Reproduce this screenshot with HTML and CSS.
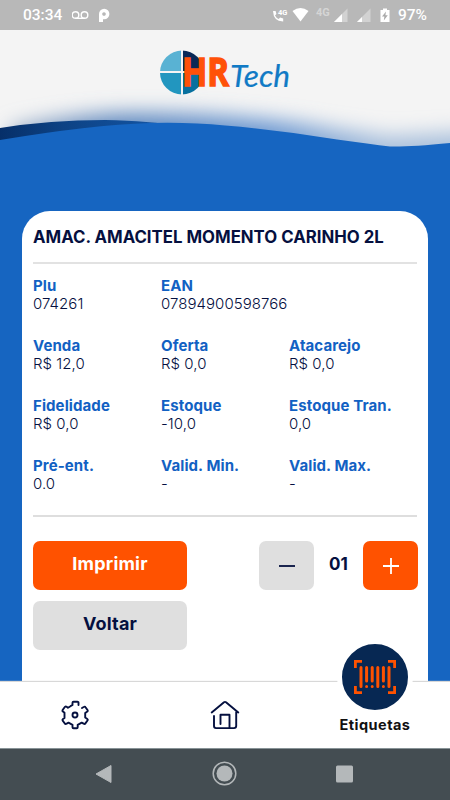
FILE: index.html
```html
<!DOCTYPE html>
<html lang="pt-BR">
<head>
    <meta charset="UTF-8">
    <meta name="viewport" content="width=device-width, initial-scale=1.0">
    <title>HRTech - Etiquetas</title>
    <link rel="stylesheet" href="styles.css">
</head>
<body>
    <div class="status-bar">
        <span class="clock">03:34</span>
        <svg class="status-left" width="42" height="30" viewBox="0 0 42 30">
            <g fill="none" stroke="#fff" stroke-width="1.4">
                <circle cx="3.5" cy="15" r="3.3"/>
                <circle cx="12.5" cy="15" r="3.3"/>
                <path d="M3.5 18.3h9"/>
            </g>
            <path fill="#fff" fill-rule="evenodd" d="M27 22V14a5.200 5.200 0 1 1 5.200 5.200h-1.200V22zM32 12.200a1.800 1.800 0 1 0 .01 0z"/>
        </svg>
        <svg class="status-right" width="122" height="30" viewBox="0 0 122 30">
            <path fill="#fff" d="M1 11h2.600l.8 3-1.400 1.400q1.400 2.600 3.700 3.600l1.400-1.500 3.100.9v3Q1.500 21.500 1 11z"/>
            <text class="tiny" x="6" y="15">4G</text>
            <path fill="#fff" d="M20.500 11Q28.500 5 36.500 11L28.500 21.500z"/>
            <text class="network" x="44" y="16">4G</text>
            <path fill="#d2d2d2" d="M75.500 8.500V22H62z"/>
            <path fill="#fff" d="M70 14v8h-8z"/>
            <path fill="#d2d2d2" d="M98.500 8.500V22H85z"/>
            <path fill="#fff" d="M90 17v5h-5z"/>
            <path fill="#fff" d="M108.500 10h2.500V8.500h4V10h2.500v12h-9z"/>
            <path fill="#aaa" d="M114 11.500l-4 5h2.400l-.6 4 4-5.200h-2.400z"/>
        </svg>
        <span class="battery">97%</span>
    </div>

    <header>
        <svg width="450" height="130" viewBox="0 30 450 130">
            <defs>
                <linearGradient id="dark" x1="0" x2="1" y1="0" y2="0">
                    <stop offset="0" stop-color="#062f69"/>
                    <stop offset=".35" stop-color="#0d4284"/>
                    <stop offset="1" stop-color="#1559ab"/>
                </linearGradient>
                <linearGradient id="shade" gradientUnits="userSpaceOnUse" x1="0" x2="450" y1="0" y2="0">
                    <stop offset="0" stop-color="#9fb0c8"/>
                    <stop offset=".25" stop-color="#6089bf"/>
                    <stop offset=".6" stop-color="#6f9ad2"/>
                    <stop offset=".85" stop-color="#a9c0dc"/>
                    <stop offset="1" stop-color="#a9c0dc"/>
                </linearGradient>
                <filter id="soft" x="-20%" y="-60%" width="140%" height="220%">
                    <feGaussianBlur stdDeviation="10"/>
                </filter>
                <clipPath id="circle"><circle cx="182" cy="72.500" r="22"/></clipPath>
            </defs>
            <rect y="30" width="450" height="130" fill="#f4f4f4"/>
            <path fill="url(#shade)" filter="url(#soft)" d="M10 128Q80 111 160 113Q225 114 300 123Q345 131 390 136L480 131V190H10z"/>
            <path fill="url(#dark)" d="M0 128Q50 120 105 120Q150 121 180 126L0 145z"/>
            <path fill="#1665c1" d="M0 140Q90 125 150 123Q190 122 225 125.500Q280 130 337 139.500Q370 144 390 146.500Q410 147 450 143V160H0z"/>

            <g clip-path="url(#circle)">
                <rect x="160" y="50" width="21" height="21" fill="#59b2d3"/>
                <rect x="183" y="50" width="22" height="21" fill="#092957"/>
                <rect x="160" y="73" width="21" height="22" fill="#2296bf"/>
                <rect x="183" y="73" width="22" height="22" fill="#07709f"/>
            </g>
            <text class="logo-hr" x="182" y="86" textLength="47" lengthAdjust="spacingAndGlyphs">HR</text>
            <text class="logo-tech" x="230" y="86.500" textLength="60" lengthAdjust="spacingAndGlyphs">Tech</text>
        </svg>
    </header>

    <main>
        <section class="card">
            <h1>AMAC. AMACITEL MOMENTO CARINHO 2L</h1>
            <dl class="fields">
                <div><dt>Plu</dt><dd>074261</dd></div>
                <div class="ean"><dt>EAN</dt><dd>07894900598766</dd></div>
                <div><dt>Venda</dt><dd>R$ 12,0</dd></div>
                <div><dt>Oferta</dt><dd>R$ 0,0</dd></div>
                <div><dt>Atacarejo</dt><dd>R$ 0,0</dd></div>
                <div><dt>Fidelidade</dt><dd>R$ 0,0</dd></div>
                <div><dt>Estoque</dt><dd>-10,0</dd></div>
                <div><dt>Estoque Tran.</dt><dd>0,0</dd></div>
                <div><dt>Pré-ent.</dt><dd>0.0</dd></div>
                <div><dt>Valid. Min.</dt><dd>-</dd></div>
                <div><dt>Valid. Max.</dt><dd>-</dd></div>
            </dl>
            <div class="actions">
                <div class="buttons">
                    <button class="btn primary">Imprimir</button>
                    <button class="btn">Voltar</button>
                </div>
                <div class="counter">
                    <button class="btn step" aria-label="Menos">
                        <svg width="16" height="16"><path d="M0 8h16" stroke="#05103f" stroke-width="1.800"/></svg>
                    </button>
                    <span class="quantity">01</span>
                    <button class="btn step primary" aria-label="Mais">
                        <svg width="16" height="16"><path d="M0 8h16M8 0v16" stroke="#fff" stroke-width="1.800"/></svg>
                    </button>
                </div>
            </div>
        </section>
    </main>

    <nav class="tabs">
        <a class="tab">
            <svg width="30" height="30" viewBox="0 0 30 30" fill="none" stroke="#05103f" stroke-width="1.900" stroke-linecap="round" stroke-linejoin="round">
                <path d="M18.500 5V2.500Q18.500 1.800 17.500 1.800H13.500Q12.500 1.800 12.500 2.800V5Q11.800 5.500 10.500 6.200L8 7.700Q6 5.800 5 6.800L2.600 10Q2 11 3 11.600L4.500 12.800V18L3 19Q2 19.800 2.700 20.700L4.800 23.500Q5.500 24.300 6.700 23.600L8.500 22.700L12.500 24.800V27.300Q12.500 28.300 13.600 28.300H16.700Q17.700 28.300 17.700 27.200V24.800L21.700 22.700L23.600 23.700Q24.800 24.300 25.400 23.400L27.500 20.500Q28.200 19.500 27 18.700L25.200 17.500V13L27 11.700Q28.200 11 27.500 10L25.500 7.200Q24.900 6.200 23.700 7L22 8"/>
                <circle cx="15" cy="15" r="2.500"/>
            </svg>
        </a>
        <a class="tab">
            <svg width="30" height="30" viewBox="0 0 30 30" fill="none" stroke="#05103f" stroke-width="1.900" stroke-linecap="round" stroke-linejoin="round">
                <path d="M1.700 12.500L14 2.200Q15 1.500 16 2.200L28.300 12.500M4 16V26Q4 28.100 6 28.100H24Q26.200 28.100 26.200 26V12M10.500 24V14.700H19.500V28"/>
            </svg>
        </a>
        <a class="tab active">
            <span class="bubble">
                <svg width="44" height="36" viewBox="0 0 44 36" fill="none" stroke="#ff5200" stroke-width="2.800">
                    <path d="M2.400 9V2.400H9M35 2.400H41.600V9M2.400 27V33.600H9M35 33.600H41.600V27"/>
                    <path stroke-linecap="round" stroke-width="3" d="M8 8.500V27.500M13.600 8.500V22M19.200 8.500V22M24.800 8.500V27.500M30.400 8.500V22M36 8.500V27.500M13.600 27.500v.01M19.200 27.500v.01M30.400 27.500v.01"/>
                </svg>
            </span>
            <span class="tab-label">Etiquetas</span>
        </a>
    </nav>

    <footer class="system-nav">
        <svg width="24" height="26"><path d="M3 13L18 4.500V21.500z" fill="#b4b8ba" stroke="#b4b8ba" stroke-linejoin="round"/></svg>
        <svg width="26" height="26"><circle cx="12.500" cy="12.500" r="11.300" fill="none" stroke="#b4b8ba" stroke-width="1.500"/><circle cx="12.500" cy="12.500" r="8" fill="#b4b8ba"/></svg>
        <svg width="24" height="26"><rect x="3" y="4.500" width="17" height="17" rx="1.500" fill="#b4b8ba"/></svg>
    </footer>
</body>
</html>
```
FILE: styles.css
```css
* {
    box-sizing: border-box;
}
body {
    margin: 0;
    width: 450px;
    height: 800px;
    display: flex;
    flex-direction: column;
    overflow: hidden;
    background: #1665c1;
    font-family: Inter, "Liberation Sans", sans-serif;
    color: #05103f;
}
svg {
    display: block;
}
.status-bar {
    display: flex;
    align-items: center;
    height: 30px;
    flex: none;
    padding: 0 23px;
    background: #b8b8b8;
    color: #fff;
    font: 500 15.5px/32px Roboto, sans-serif;
}
.clock {
    width: 49px;
}
.status-right {
    margin-left: auto;
    margin-right: 4px;
}
.tiny {
    font: 700 7.5px Roboto, sans-serif;
    fill: #fff;
}
.network {
    font: 700 11px Roboto, sans-serif;
    fill: #d5d5d5;
}
header {
    height: 130px;
    flex: none;
}
.logo-hr {
    font: 700 39px "Open Sans", sans-serif;
    fill: #ff5108;
    stroke: #ff5108;
    stroke-width: 1.5px;
}
.logo-tech {
    font: italic 400 30px Lato, sans-serif;
    fill: #107ac5;
    stroke: #107ac5;
    stroke-width: .2px;
}
main {
    flex: 1;
    padding: 51px 22px 0;
    display: flex;
}
.card {
    flex: 1;
    padding: 0 11px;
    background: #fff;
    border-radius: 28px 28px 0 0;
}
h1 {
    margin: 0;
    height: 53px;
    border-bottom: 2px solid #e2e2e2;
    font-size: 16.8px;
    font-weight: 700;
    line-height: 53px;
    white-space: nowrap;
}
.fields {
    display: grid;
    grid-template-columns: 128px 128px 128px;
    grid-auto-rows: 60px;
    margin: 0;
    padding-top: 11px;
    height: 253px;
    border-bottom: 2px solid #dedede;
    white-space: nowrap;
}
.ean {
    grid-column: span 2;
}
dt {
    color: #1261c3;
    font-size: 15px;
    font-weight: 700;
    letter-spacing: .1px;
    line-height: 21px;
}
dd {
    margin: 0;
    font-size: 15px;
    font-weight: 300;
    letter-spacing: .05px;
    line-height: 16px;
}
.actions {
    display: flex;
    justify-content: space-between;
    padding-top: 24px;
}
.buttons {
    display: flex;
    flex-direction: column;
    gap: 11px;
}
.btn {
    display: flex;
    align-items: center;
    justify-content: center;
    width: 154px;
    height: 49px;
    padding: 0 0 4px;
    border: 0;
    border-radius: 7px;
    background: #dfdfdf;
    color: #05103f;
    font: 700 18px Inter, sans-serif;
    letter-spacing: .2px;
}
.btn.primary {
    background: #ff5200;
    color: #fff;
}
.btn.step {
    width: 55px;
    padding: 0;
}
.counter {
    display: flex;
    height: 49px;
    margin-right: -1px;
}
.quantity {
    width: 49px;
    text-align: center;
    font-size: 17px;
    font-weight: 700;
    line-height: 47px;
}
.tabs {
    display: flex;
    flex: none;
    height: 66px;
    background: #fff;
    box-shadow: 0 -1px 1px #d8d8d8;
}
.tab {
    display: flex;
    flex: 1;
    flex-direction: column;
    align-items: center;
    justify-content: center;
}
.active {
    justify-content: flex-start;
}
.bubble {
    display: flex;
    flex: none;
    align-items: center;
    justify-content: center;
    width: 76px;
    height: 76px;
    margin-top: -43px;
    border: 5px solid #fff;
    border-radius: 50%;
    background: #072853;
}
.tab-label {
    color: #111;
    font-size: 14.5px;
    font-weight: 700;
    letter-spacing: .45px;
    line-height: 19px;
}
.system-nav {
    display: flex;
    flex: none;
    justify-content: center;
    gap: 95px;
    height: 52px;
    padding-top: 12px;
    border-top: 1px solid #889397;
    background: #444d52;
}
```
